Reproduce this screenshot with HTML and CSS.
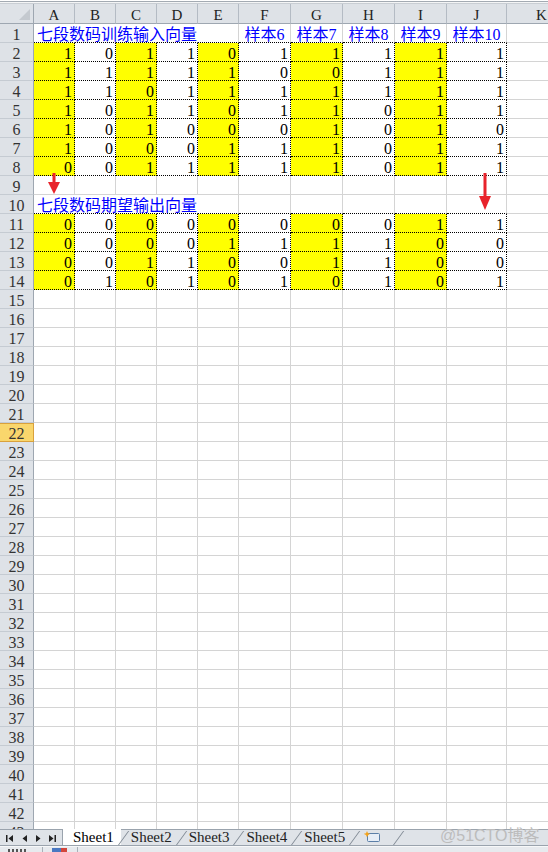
FILE: index.html
```html
<!DOCTYPE html>
<html lang="zh-CN">
<head>
<meta charset="utf-8">
<title>Sheet1</title>
<link rel="stylesheet" href="styles.css">
</head>
<body>
<div class="app">
  <div class="topstrip"></div>
  <div class="sheet">
    <div class="grid" id="grid"></div>
    <svg class="arrow arrow1" width="14" height="22" viewBox="0 0 14 22">
      <rect x="5.5" y="0" width="3" height="10" fill="#e8232b"/>
      <polygon points="1,9 13,9 7,21" fill="#e8232b"/>
    </svg>
    <svg class="arrow arrow2" width="14" height="38" viewBox="0 0 14 38">
      <rect x="5.5" y="0" width="3" height="24" fill="#e8232b"/>
      <polygon points="1,23 13,23 7,37" fill="#e8232b"/>
    </svg>
  </div>
  <div class="tabbar">
    <div class="nav">
      <svg width="62" height="15" viewBox="0 0 62 15">
        <rect x="6" y="5" width="1.5" height="7" fill="#222"/>
        <polygon points="13,5 13,12 8.5,8.5" fill="#222"/>
        <polygon points="27,5 27,12 22.5,8.5" fill="#222"/>
        <polygon points="36,5 36,12 40.5,8.5" fill="#222"/>
        <polygon points="49,5 49,12 53.5,8.5" fill="#222"/>
        <rect x="54.5" y="5" width="1.5" height="7" fill="#222"/>
      </svg>
    </div>
    <div class="tabs">
      <span class="tab active">Sheet1</span>
      <span class="tab">Sheet2</span>
      <span class="tab">Sheet3</span>
      <span class="tab">Sheet4</span>
      <span class="tab">Sheet5</span>
      <span class="tab newtab">
        <svg width="17" height="12" viewBox="0 0 17 12">
          <rect x="3.5" y="2.5" width="12" height="8" rx="1" fill="#e6edf6" stroke="#5b7fa8"/>
          <path d="M3 0 L4 2.2 L6.3 2.8 L4.2 4 L3 6.3 L2 4 L-0.3 2.8 L2 2.2 Z" fill="#f3a31b"/>
        </svg>
      </span>
    </div>
    <span class="watermark">@51CTO博客</span>
  </div>
  <div class="status">
    <span class="st-text"></span>
    <span class="st-sep"></span>
    <span class="st-icon"></span>
    <span class="st-sep"></span>
  </div>
</div>
<script src="script.js"></script>
</body>
</html>
```

FILE: styles.css
```css
* { box-sizing: border-box; }
html, body { margin: 0; padding: 0; }
body {
  width: 548px;
  height: 852px;
  overflow: hidden;
  background: #fff;
  font-family: "Liberation Serif", "Noto Sans CJK SC", serif;
}
.app { display: flex; flex-direction: column; height: 852px; }

.topstrip {
  height: 4px;
  flex: none;
  background: linear-gradient(#fff 0 1px, #a3aab2 1px 2px, #f4f5f6 2px 3px, #c9ced4 3px 4px);
}

.sheet { position: relative; height: 825px; flex: none; overflow: hidden; }
.grid {
  display: grid;
  grid-template-columns: 34px 41px 41px 41px 41px 41px 52px 52px 52px 52px 60px 70px;
  grid-template-rows: 20px;
  grid-auto-rows: 19px;
  width: 576px;
}

.corner {
  position: relative;
  background: #dee2e7;
  border-right: 1px solid #9ea7b1;
  border-bottom: 1px solid #9ea7b1;
}
.corner::after {
  content: "";
  position: absolute;
  right: 3px;
  bottom: 3px;
  width: 0;
  height: 0;
  border-left: 11px solid transparent;
  border-bottom: 11px solid #c4c9cf;
}
.ch {
  background: #dee2e7;
  border-right: 1px solid #b4bbc4;
  border-bottom: 1px solid #9ea7b1;
  text-align: center;
  font-size: 15px;
  line-height: 18px;
  padding-top: 2px;
  color: #222;
}
.rh {
  background: #dee2e7;
  border-right: 1px solid #9ea7b1;
  border-bottom: 1px solid #c5cbd2;
  text-align: center;
  font-size: 16px;
  line-height: 18px;
  padding-top: 2px;
  color: #333;
}
.rh.sel {
  background: #f9d66c;
  border-right-color: #d9a13c;
  border-bottom-color: #d9a13c;
  box-shadow: inset 0 1px 0 #d9a13c;
}

.c {
  border-right: 1px solid #d4d4d4;
  border-bottom: 1px solid #d4d4d4;
  font-size: 16px;
  line-height: 18px;
  padding: 2px 2px 0 0;
  text-align: right;
  white-space: nowrap;
  color: #000;
}
.y { background: #ffff00; }
.d { border-right: 1px dotted #000; border-bottom: 1px dotted #000; }
.db { border-bottom: 1px dotted #000; }
.nr { border-right-color: transparent; }
.t { text-align: left; padding-left: 3px; color: #0000ff; }
.lab { text-align: center; padding-right: 0; color: #0000ff; }

.arrow { position: absolute; }
.arrow1 { left: 47px; top: 169px; }
.arrow2 { left: 478px; top: 169px; }

.tabbar {
  position: relative;
  height: 17px;
  flex: none;
  display: flex;
  background: #dfe3e8;
  border-top: 1px solid #9aa3ad;
  border-bottom: 1px solid #9aa3ad;
}
.nav {
  width: 63px;
  flex: none;
  border-right: 1px solid #9aa3ad;
}
.nav svg { display: block; }
.tabs { display: flex; }
.tab {
  position: relative;
  padding: 0 7px 0 10px;
  font-size: 15px;
  line-height: 15px;
  color: #222;
}
.tab.active {
  background: #fff;
  color: #000;
  margin-top: -1px;
  padding-top: 1px;
}
.tab + .tab::before {
  content: "";
  position: absolute;
  left: -3px;
  bottom: 0;
  height: 14px;
  border-left: 1px solid #7d8791;
  transform: skewX(-36deg);
  transform-origin: bottom left;
}
.newtab { padding: 1px 14px 0 12px; }
.newtab svg { display: block; }
.newtab::after {
  content: "";
  position: absolute;
  right: 1px;
  bottom: 0;
  height: 14px;
  border-left: 1px solid #7d8791;
  transform: skewX(-36deg);
  transform-origin: bottom left;
}
.watermark {
  position: absolute;
  left: 440px;
  top: -3px;
  font-family: "Liberation Sans", "Noto Sans CJK SC", sans-serif;
  font-size: 16px;
  line-height: 18px;
  color: #bcbcbc;
}

.status {
  height: 6px;
  flex: none;
  display: flex;
  background: #e7eaee;
  border-top: 1px solid #f7f8f9;
}
.st-text {
  width: 20px;
  height: 3px;
  margin: 2px 14px 0 8px;
  background: repeating-linear-gradient(90deg, #555 0 2px, transparent 2px 4px);
}
.st-sep { width: 1px; background: #a9b0b8; }
.st-icon {
  width: 15px;
  height: 4px;
  margin: 1px 10px 0 9px;
  background: linear-gradient(90deg, #4a78c2 0 60%, #d3463c 60%);
}
```

FILE: script.js
```js
(function () {
  var grid = document.getElementById('grid');
  var letters = ['A', 'B', 'C', 'D', 'E', 'F', 'G', 'H', 'I', 'J', 'K'];
  var data = {
    2: '1011011111',
    3: '1111100111',
    4: '1101111111',
    5: '1011011011',
    6: '1010001010',
    7: '1000111011',
    8: '0011111011',
    11: '0000000011',
    12: '0000111100',
    13: '0011001100',
    14: '0101010101'
  };
  function cell(cls, text) {
    var d = document.createElement('div');
    d.className = cls;
    if (text) d.textContent = text;
    grid.appendChild(d);
  }
  cell('corner');
  letters.forEach(function (l) { cell('ch', l); });
  for (var r = 1; r <= 43; r++) {
    cell(r === 22 ? 'rh sel' : 'rh', String(r));
    for (var ci = 0; ci < 11; ci++) {
      var cls = 'c';
      var txt = '';
      var title = (r === 1 || r === 10);
      if (data[r] && ci < 10) {
        cls += ' d';
        if (ci % 2 === 0) cls += ' y';
        txt = data[r].charAt(ci);
      } else if (title && ci < 10) {
        cls += ' db';
      }
      if (title && ci === 0) {
        cls += ' t';
        txt = r === 1 ? '七段数码训练输入向量' : '七段数码期望输出向量';
      }
      if (title && ci < 4) cls += ' nr';
      if (r === 1 && ci >= 5 && ci <= 9) {
        cls += ' lab';
        txt = '样本' + (ci + 1);
      }
      cell(cls, txt);
    }
  }
})();
```
